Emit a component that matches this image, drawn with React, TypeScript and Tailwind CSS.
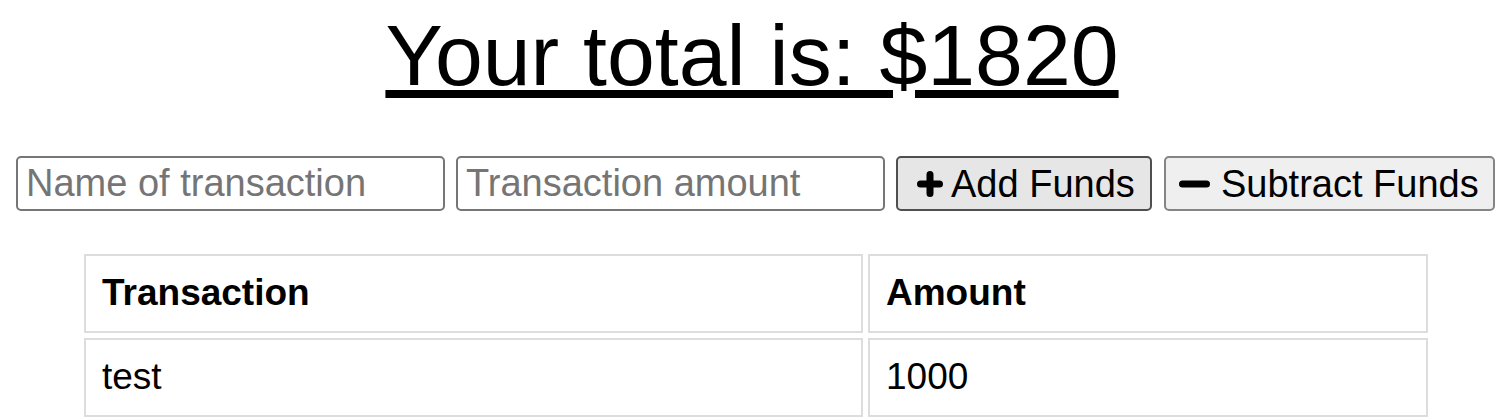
const rows = [{ name: "test", amount: 1000 }];

const cell = "h-[79px] border-2 border-[#dddddd] px-[16px] py-[16px] text-[37px] leading-[1.15]";

function PlusIcon() {
  return (
    <svg viewBox="0 0 26 26" className="h-[26px] w-[26px] shrink-0" fill="none">
      <path d="M13 3.5v19M3.5 13h19" stroke="black" strokeWidth="7" strokeLinecap="round" />
    </svg>
  );
}

function MinusIcon() {
  return (
    <svg viewBox="0 0 31 8" className="h-[8px] w-[31px] shrink-0" fill="none">
      <path d="M3.5 4h24" stroke="black" strokeWidth="7" strokeLinecap="round" />
    </svg>
  );
}

export default function App() {
  return (
    <div className="min-h-screen bg-white font-['Liberation_Sans',Arial,sans-serif] text-black">
      <h1 className="mt-[7px] text-center text-[86px] font-normal leading-[96px] underline">
        Your total is: $1820
      </h1>

      <div className="mt-[53px] flex items-center gap-[11px] pl-[16px]">
        <input
          placeholder="Name of transaction"
          className="h-[55px] w-[429px] rounded-[5px] border-2 border-[#767676] bg-white px-[8px] text-[38px] text-black outline-none placeholder:text-[#757575]"
        />
        <input
          placeholder="Transaction amount"
          className="h-[55px] w-[429px] rounded-[5px] border-2 border-[#767676] bg-white px-[8px] text-[38px] text-black outline-none placeholder:text-[#757575]"
        />
        <button className="flex h-[55px] w-[256px] items-center gap-[8px] rounded-[5px] border-2 border-[#4f4f4f] bg-[#e6e6e6] pl-[19px] text-[38px] leading-none">
          <PlusIcon />
          <span>Add Funds</span>
        </button>
        <button className="ml-[1px] flex h-[55px] w-[331px] items-center gap-[11px] rounded-[5px] border-2 border-[#858585] bg-[#efefef] pl-[13px] text-[38px] leading-none">
          <MinusIcon />
          <span>Subtract Funds</span>
        </button>
      </div>

      <div className="ml-[84px] mt-[43px] grid w-[1344px] grid-cols-[779px_560px] gap-[5px]">
        <div className={cell + " font-bold"}>Transaction</div>
        <div className={cell + " font-bold"}>Amount</div>
        {rows.map((r) => (
          <>
            <div key={r.name + "n"} className={cell}>
              {r.name}
            </div>
            <div key={r.name + "a"} className={cell}>
              {r.amount}
            </div>
          </>
        ))}
      </div>
    </div>
  );
}
